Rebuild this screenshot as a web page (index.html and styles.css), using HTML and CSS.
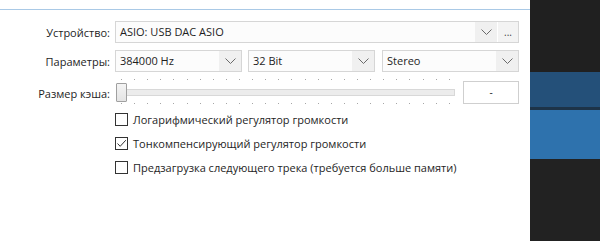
FILE: index.html
```html
<!DOCTYPE html>
<html lang="ru">
<head>
<meta charset="utf-8">
<link rel="stylesheet" href="styles.css">
</head>
<body>
<div class="screen">
  <div class="panel">
    <div class="form">
      <div class="label">Устройство:</div>
      <div class="row">
        <div class="combo grow">
          <span class="value">ASIO: USB DAC ASIO</span>
          <span class="arrow"><svg width="11" height="6" viewBox="0 0 11 6"><path d="M0.5 0.5 L5.5 5.5 L10.5 0.5" fill="none" stroke="#6a6a6a" stroke-width="1"/></svg></span>
          <span class="more">...</span>
        </div>
      </div>

      <div class="label">Параметры:</div>
      <div class="row">
        <div class="combo w1">
          <span class="value">384000 Hz</span>
          <span class="arrow"><svg width="11" height="6" viewBox="0 0 11 6"><path d="M0.5 0.5 L5.5 5.5 L10.5 0.5" fill="none" stroke="#6a6a6a" stroke-width="1"/></svg></span>
        </div>
        <div class="combo w1">
          <span class="value">32 Bit</span>
          <span class="arrow"><svg width="11" height="6" viewBox="0 0 11 6"><path d="M0.5 0.5 L5.5 5.5 L10.5 0.5" fill="none" stroke="#6a6a6a" stroke-width="1"/></svg></span>
        </div>
        <div class="combo grow">
          <span class="value">Stereo</span>
          <span class="arrow"><svg width="11" height="6" viewBox="0 0 11 6"><path d="M0.5 0.5 L5.5 5.5 L10.5 0.5" fill="none" stroke="#6a6a6a" stroke-width="1"/></svg></span>
        </div>
      </div>

      <div class="label slabel">Размер кэша:</div>
      <div class="row srow">
        <div class="slider">
          <div class="ticks top"><i></i><i></i><i></i><i></i><i></i><i></i><i></i><i></i><i></i><i></i><i></i><i></i><i></i><i></i><i></i><i></i><i></i><i></i><i></i><i></i><i></i><i></i><i></i><i></i><i></i><i></i></div>
          <div class="track"><div class="thumb"></div><div class="rail"></div></div>
          <div class="ticks bottom"><i></i><i></i><i></i><i></i><i></i><i></i><i></i><i></i><i></i><i></i><i></i><i></i><i></i><i></i><i></i><i></i><i></i><i></i><i></i><i></i><i></i><i></i><i></i><i></i><i></i><i></i></div>
        </div>
        <div class="textbox">-</div>
      </div>

      <div></div>
      <div class="checks">
        <label class="check"><span class="box"></span>Логарифмический регулятор громкости</label>
        <label class="check"><span class="box"><svg width="11" height="11" viewBox="0 0 11 11"><path d="M1.5 5.5 L4.2 8.3 L9.8 2.2" fill="none" stroke="#333" stroke-width="1"/></svg></span>Тонкомпенсирующий регулятор громкости</label>
        <label class="check"><span class="box"></span>Предзагрузка следующего трека (требуется больше памяти)</label>
      </div>
    </div>
  </div>
  <div class="side">
    <div class="s-dark1"></div>
    <div class="s-blue1"></div>
    <div class="s-sep"></div>
    <div class="s-blue2"></div>
    <div class="s-dark2"></div>
  </div>
</div>
</body>
</html>
```

FILE: styles.css
```css
* { box-sizing: border-box; }
html, body { margin: 0; padding: 0; }
body {
  width: 600px;
  height: 241px;
  overflow: hidden;
  background: #fff;
  font-family: "Open Sans", "Noto Sans", sans-serif;
  font-size: 11px;
  color: #1e1e1e;
}
.screen {
  display: flex;
  width: 600px;
  height: 241px;
}
.panel {
  width: 530px;
  height: 241px;
  background: #fff;
  padding-top: 9px;
}
.form {
  border-top: 1px solid #a9c9e6;
  padding: 11px 11px 0 0;
  display: grid;
  grid-template-columns: 115px 404px;
  row-gap: 7px;
  align-items: center;
}
.label {
  text-align: right;
  padding-right: 5px;
}
.row {
  display: flex;
  gap: 6px;
  height: 22px;
}
.combo {
  display: flex;
  align-items: stretch;
  border: 1px solid #d6d6d6;
  background: #fcfcfc;
  height: 22px;
}
.combo.w1 { width: 127px; }
.combo.grow { flex: 1; }
.combo + .combo.grow { margin-left: 1px; }
.value {
  flex: 1;
  padding-left: 4px;
  line-height: 20px;
  white-space: nowrap;
  overflow: hidden;
}
.arrow {
  width: 22px;
  display: flex;
  align-items: center;
  justify-content: center;
  background: #f0f0f0;
}
.more {
  width: 21px;
  background: #f3f3f3;
  border-left: 1px solid #fff;
  text-align: center;
  line-height: 20px;
  font-size: 10px;
  color: #444;
}
.srow {
  height: 26px;
  gap: 8px;
  align-items: center;
}
.slabel { margin-top: 2px; }
.slider {
  width: 340px;
  height: 26px;
  display: flex;
  flex-direction: column;
  justify-content: space-between;
}
.ticks {
  display: flex;
  justify-content: space-between;
  width: 329px;
  margin-left: 6px;
  height: 2px;
}
.ticks i {
  width: 1px;
  height: 1px;
  background: #a6a6a6;
}
.track {
  display: flex;
  align-items: center;
  height: 19px;
  margin-left: 1px;
}
.thumb {
  width: 11px;
  height: 19px;
  border: 1px solid #a0a0a0;
  border-radius: 1px;
  background: linear-gradient(#f4f4f4, #e4e4e4);
  flex: none;
}
.rail {
  flex: 1;
  height: 7px;
  border: 1px solid #d8d8d8;
  border-left: none;
  background: #ececec;
}
.textbox {
  width: 56px;
  height: 23px;
  border: 1px solid #cfcfcf;
  background: #fff;
  text-align: center;
  line-height: 20px;
  font-size: 10px;
}
.checks {
  display: flex;
  flex-direction: column;
  gap: 11px;
  padding-top: 1px;
}
.check {
  display: flex;
  align-items: center;
  gap: 5px;
  height: 13px;
}
.box {
  width: 13px;
  height: 13px;
  border: 1px solid #333;
  background: #fff;
  display: flex;
  align-items: center;
  justify-content: center;
  flex: none;
}
.side {
  width: 70px;
  height: 241px;
  display: flex;
  flex-direction: column;
}
.s-dark1 { height: 72px; background: #202020; }
.s-blue1 { height: 35px; background: #245079; }
.s-sep { height: 3px; background: #1d3348; }
.s-blue2 { height: 49px; background: #2e72ad; }
.s-dark2 { flex: 1; background: #222222; }
```
